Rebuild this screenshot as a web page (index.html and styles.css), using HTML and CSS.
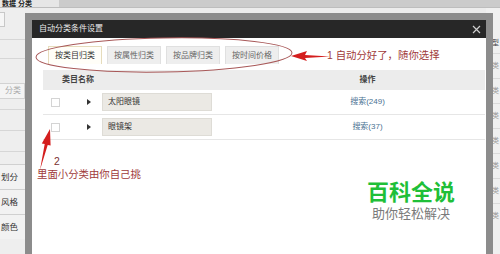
FILE: index.html
```html
<!DOCTYPE html>
<html lang="zh-CN">
<head>
    <meta charset="UTF-8">
    <title>自动分类条件设置</title>
    <link rel="stylesheet" href="styles.css">
</head>
<body>
    <!-- pagina de fundo -->
    <div class="topbar">
        <span class="top-tab">数据 分类</span>
    </div>
    <div class="layout">
        <div class="side">
            <div class="s-box"></div>
            <div class="s-line s-l1"></div>
            <div class="s-line s-l2"></div>
            <div class="s-input">分类</div>
            <div class="s-line s-l3"></div>
            <div class="s-line s-l4"></div>
            <div class="s-line s-l5"></div>
            <div class="s-row s-first">划分</div>
            <div class="s-row">风格</div>
            <div class="s-row">颜色</div>
        </div>
        <div class="main"></div>
        <div class="side-right">
            <div class="r-row r-top">型</div>
            <div class="r-row">类</div>
            <div class="r-row r-gap">类</div>
            <div class="r-row">类</div>
            <div class="r-row">类</div>
            <div class="r-row">类</div>
            <div class="r-row">类</div>
            <div class="r-row">类</div>
        </div>
    </div>

    <!-- janela modal -->
    <div class="modal">
        <div class="modal-title">
            <span>自动分类条件设置</span>
            <svg class="close" width="9" height="9" viewBox="0 0 9 9">
                <path d="M1 1 L8 8 M8 1 L1 8" stroke="#cfcfcf" stroke-width="1.2" fill="none"/>
            </svg>
        </div>
        <div class="modal-body">
            <div class="tabs">
                <div class="tab active">按类目归类</div>
                <div class="tab">按属性归类</div>
                <div class="tab">按品牌归类</div>
                <div class="tab">按时间价格</div>
            </div>
            <div class="table">
                <div class="thead">
                    <div class="th-name">类目名称</div>
                    <div class="th-op">操作</div>
                </div>
                <div class="tr">
                    <div class="td-name">
                        <span class="check"></span>
                        <span class="arrow"></span>
                        <span class="cat">太阳眼镜</span>
                    </div>
                    <div class="td-op"><a href="#">搜索(249)</a></div>
                </div>
                <div class="tr">
                    <div class="td-name">
                        <span class="check"></span>
                        <span class="arrow"></span>
                        <span class="cat">眼镜架</span>
                    </div>
                    <div class="td-op"><a href="#">搜索(37)</a></div>
                </div>
            </div>
        </div>
    </div>

    <!-- anotacoes -->
    <svg class="marks" width="500" height="254" viewBox="0 0 500 254">
        <ellipse cx="164" cy="55" rx="128" ry="17" transform="rotate(-1 164 55)" fill="none" stroke="#a85858" stroke-width="1"/>
        <path d="M291 56 L307 51 L305 55 L330 56.5 L305 58 L307 61 Z" fill="#d41e1e"/>
        <path d="M50 129 L50.6 145.6 L47.7 144.9 L40 170 L44.7 144.1 L41.8 143.4 Z" fill="#d41e1e"/>
    </svg>
    <div class="note note-1">1 自动分好了，随你选择</div>
    <div class="note note-2">2</div>
    <div class="note note-3">里面小分类由你自己挑</div>

    <div class="brand">
        <div class="brand-name">百科全说</div>
        <div class="brand-sub">助你轻松解决</div>
    </div>
</body>
</html>
```

FILE: styles.css
```css
body {
    margin: 0;
    width: 500px;
    height: 254px;
    overflow: hidden;
    position: relative;
    background: #ececec;
    font-family: "Liberation Sans", "Noto Sans CJK SC", sans-serif;
    color: #333;
}

/* pagina de fundo */
.topbar {
    height: 7px;
    background: #cbcbcb;
    border-bottom: 1px solid #bdbdbd;
    overflow: hidden;
}

.top-tab {
    display: block;
    width: 57px;
    height: 7px;
    background: #e6e6e6;
    font-size: 7px;
    font-weight: bold;
    line-height: 7px;
    padding-left: 2px;
    color: #222;
}

.layout {
    display: flex;
    height: 246px;
}

.side {
    width: 25px;
    background: #eeeeee;
}

.s-box {
    width: 4px;
    height: 13px;
    margin-top: 4px;
    border: 1px solid #c8c8c8;
    border-left: none;
    background: #f6f6f6;
}

.s-line {
    height: 1px;
    background: #d6d6d6;
}

.s-l1 { margin-top: 12px; }
.s-l2 { margin-top: 18px; }

.s-input {
    margin-top: 24px;
    height: 14px;
    border: 1px solid #d2d2d2;
    border-left: none;
    background: #f4f4f4;
    font-size: 8px;
    line-height: 14px;
    color: #aaa;
    padding-left: 5px;
}

.s-l3 { margin-top: 10px; }
.s-l4 { margin-top: 20px; }
.s-l5 { margin-top: 20px; }

.s-row {
    height: 24px;
    border-top: 1px solid #d0d0d0;
    font-size: 8.5px;
    line-height: 24px;
    padding-left: 1px;
    white-space: nowrap;
    color: #333;
    background: #f2f2f2;
}

.s-first { margin-top: 12px; }

.main {
    flex: 1;
}

.side-right {
    width: 14px;
    background: #f0f0f0;
}

.r-row {
    height: 24px;
    border-top: 1px solid #dadada;
    font-size: 7px;
    line-height: 24px;
    text-align: right;
    padding-right: 1px;
    color: #999;
}

.r-top {
    margin-top: 23px;
    border-top: none;
    height: 22px;
    color: #444;
}

/* janela modal */
.modal {
    position: absolute;
    left: 25px;
    top: 13px;
    width: 454px;
    height: 241px;
    border: 7px solid #8c8c8c;
    border-bottom: none;
    background: #fff;
}

.modal-title {
    height: 18px;
    background: #272727;
    color: #eaeaea;
    font-size: 8px;
    line-height: 18px;
    padding-left: 7px;
    display: flex;
    align-items: center;
}

.modal-title span {
    flex: 1;
}

.close {
    margin-right: 5px;
}

.modal-body {
    padding: 8px 1px 0 11px;
}

.tabs {
    display: flex;
    gap: 5px;
    margin-left: 5px;
    height: 18px;
}

.tab {
    width: 52px;
    height: 17px;
    border: 1px solid #e0e0e0;
    border-bottom: none;
    background: #eeeeee;
    font-size: 8px;
    line-height: 17px;
    text-align: center;
    color: #666;
}

.tab.active {
    background: #fffef8;
    border-color: #e6dcbc;
    color: #333;
}

.table {
    margin-top: 6px;
}

.thead {
    display: grid;
    grid-template-columns: 207px 1fr;
    height: 20px;
    background: #ececec;
    font-size: 8px;
    line-height: 20px;
    color: #444;
}

.th-name {
    padding-left: 19px;
    font-weight: bold;
}

.th-op {
    text-align: center;
    font-weight: bold;
}

.tr {
    display: grid;
    grid-template-columns: 207px 1fr;
    height: 24px;
    border-bottom: 1px solid #e6e6e6;
}

.td-name {
    display: flex;
    align-items: center;
}

.check {
    width: 7px;
    height: 7px;
    border: 1px solid #d4d4d4;
    margin-left: 8px;
    background: #fff;
}

.arrow {
    width: 0;
    height: 0;
    border-left: 4px solid #333;
    border-top: 3px solid transparent;
    border-bottom: 3px solid transparent;
    margin-left: 27px;
}

.cat {
    width: 103px;
    height: 16px;
    margin-left: 11px;
    padding-left: 5px;
    background: #ebe9e4;
    border: 1px solid #dedcd6;
    font-size: 8px;
    line-height: 16px;
    color: #333;
}

.td-op {
    text-align: center;
    font-size: 8px;
    line-height: 24px;
}

.td-op a {
    color: #4a7292;
    text-decoration: none;
}

/* anotacoes */
.marks {
    position: absolute;
    left: 0;
    top: 0;
    pointer-events: none;
}

.note {
    position: absolute;
    color: #a03a3a;
    font-size: 10.4px;
    line-height: 1;
    white-space: nowrap;
}

.note-1 {
    left: 327px;
    top: 51px;
}

.note-2 {
    left: 54px;
    top: 157px;
    color: #7a3030;
}

.note-3 {
    left: 37px;
    top: 170px;
}

.brand {
    position: absolute;
    left: 362px;
    top: 180px;
    text-align: center;
    width: 98px;
}

.brand-name {
    font-size: 22px;
    font-weight: bold;
    color: #1fbf38;
    line-height: 26px;
}

.brand-sub {
    font-size: 13px;
    color: #7a7a7a;
    line-height: 16px;
}
```
